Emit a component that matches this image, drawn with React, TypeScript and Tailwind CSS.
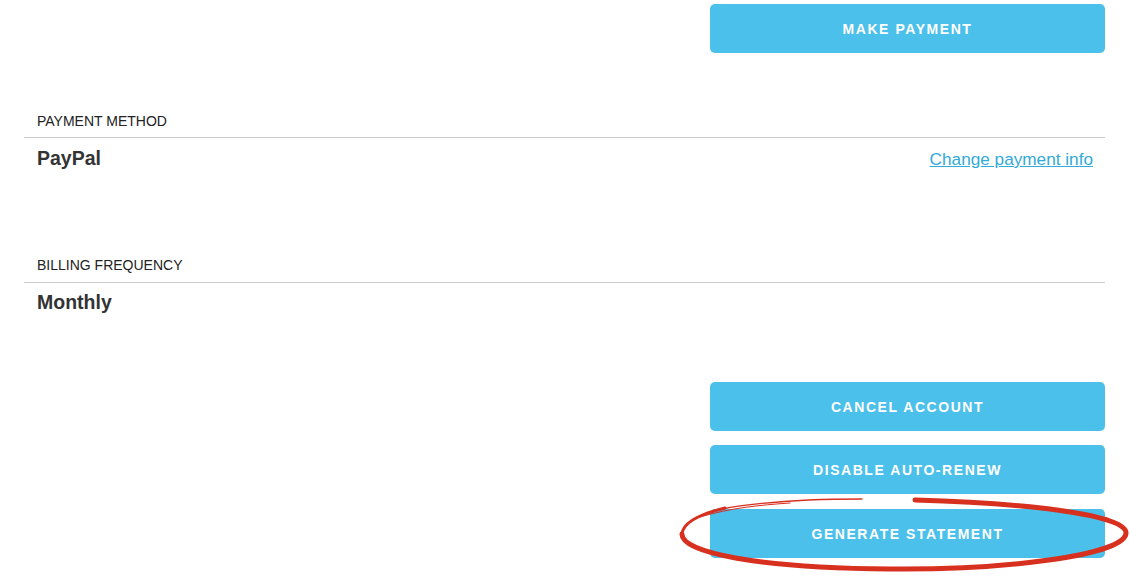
import React from "react";

function Btn({ children, className = "" }: { children: React.ReactNode; className?: string }) {
  return (
    <div className={"flex justify-end " + className}>
      <button className="w-[395px] h-[49px] pt-[2px] rounded-[5px] bg-[#4bc0ea] text-white font-bold text-[14px] tracking-[1.55px] uppercase">
        {children}
      </button>
    </div>
  );
}

export default function App() {
  return (
    <div
      className="relative w-[1130px] h-[577px] overflow-hidden bg-white text-[#2b2b2b]"
      style={{ fontFamily: '"Liberation Sans", Arial, sans-serif' }}
    >
      <div className="pl-6 pr-[25px] pt-[4px]">
        <Btn>Make Payment</Btn>

        <section className="mt-[60px]">
          <div className="px-[13px] text-[14px] leading-[16px] pb-[8px] border-b border-[#cccccc] text-[#222]">
            PAYMENT METHOD
          </div>
          <div className="flex justify-between items-start pl-[13px] pr-[12px] pt-[9px]">
            <div className="text-[19.5px] font-bold leading-[22px] text-[#333]">PayPal</div>
            <a href="#" className="text-[17.2px] leading-[22px] text-[#33aad7] underline mt-[1px]">
              Change payment info
            </a>
          </div>
        </section>

        <section className="mt-[87px]">
          <div className="px-[13px] text-[14px] leading-[16px] pb-[9px] border-b border-[#cccccc] text-[#222]">
            BILLING FREQUENCY
          </div>
          <div className="pl-[13px] pt-[8px]">
            <div className="text-[19.5px] font-bold leading-[22px] text-[#333]">Monthly</div>
          </div>
        </section>

        <Btn className="mt-[69px]">Cancel Account</Btn>
        <Btn className="mt-[14px]">Disable Auto-Renew</Btn>
        <Btn className="mt-[15px]">Generate Statement</Btn>
      </div>

      <svg
        className="absolute left-0 top-0 pointer-events-none"
        width="1130"
        height="577"
        viewBox="0 0 1130 577"
      >
        <path
          d="M 915 500 C 1020 503, 1127 514, 1126 533 C 1125 556, 1000 570, 890 569 C 760 568, 681 553, 682 534"
          fill="none"
          stroke="#d8301e"
          strokeWidth="5"
          strokeLinecap="round"
        />
        <path
          d="M 682 534 C 683 522, 700 514, 725 508"
          fill="none"
          stroke="#d8301e"
          strokeWidth="3"
          strokeLinecap="round"
        />
        <path
          d="M 722 509 C 760 502, 810 499, 862 499"
          fill="none"
          stroke="#d8301e"
          strokeWidth="1.3"
          strokeLinecap="round"
        />
        <path
          d="M 700 517 C 730 508, 760 505, 790 503"
          fill="none"
          stroke="#d8301e"
          strokeWidth="1"
          strokeLinecap="round"
        />
      </svg>
    </div>
  );
}
